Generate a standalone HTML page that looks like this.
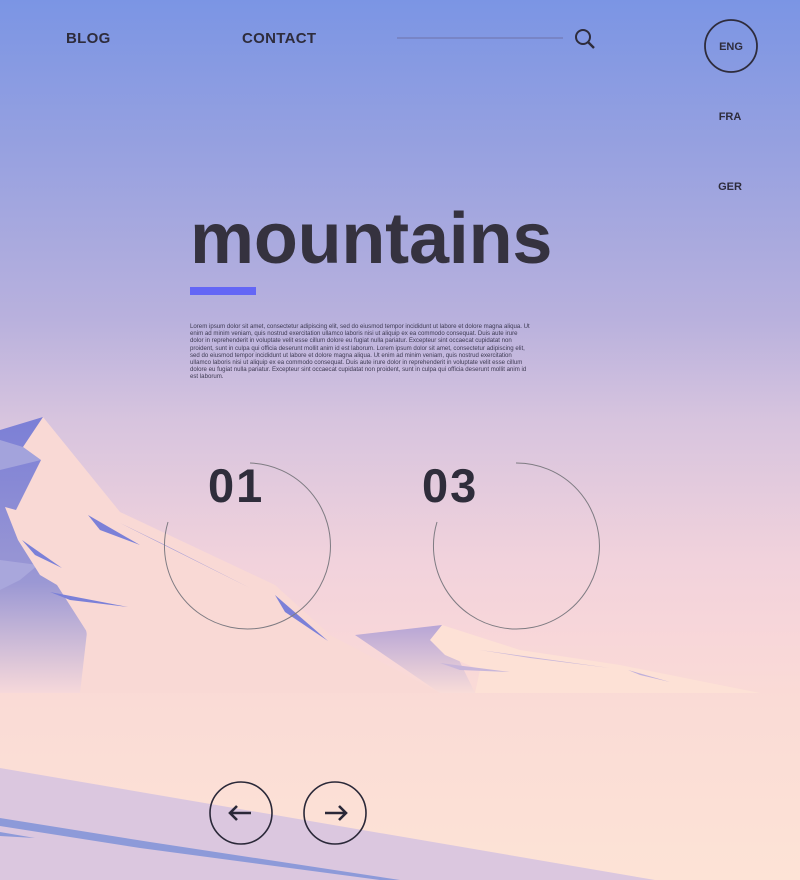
<!DOCTYPE html>
<html><head><meta charset="utf-8"><style>
*{margin:0;padding:0;box-sizing:border-box}
body{width:800px;height:880px;overflow:hidden;position:relative;font-family:"Liberation Sans",sans-serif;
background:linear-gradient(180deg,#7b95e4 0px,#97a1e0 150px,#b9b1dd 320px,#d7c4de 420px,#f1d2dc 560px,#f8d7d9 640px,#fadbd6 700px,#fde3d6 880px);}
.nav{position:absolute;font-weight:bold;font-size:15px;color:#2e2c3c;letter-spacing:.3px}
.lang{position:absolute;font-weight:bold;font-size:11px;color:#2e2c3c;width:40px;text-align:center}
svg{position:absolute;left:0;top:0}
h1{position:absolute;left:190px;top:199px;font-size:72px;font-weight:bold;color:#35323f;letter-spacing:-0.2px;line-height:80px}
.bar{position:absolute;left:190px;top:287px;width:66px;height:8px;background:#6466f6}
.p{position:absolute;left:190px;top:323px;width:340px;font-size:6.1px;line-height:7.2px;color:#3d3a52}
.num{position:absolute;font-size:47px;font-weight:bold;color:#2f2d3b;line-height:44px;letter-spacing:2px}
</style></head><body>
<svg width="800" height="880" viewBox="0 0 800 880">
<defs>
<linearGradient id="sh" x1="0" y1="0" x2="0" y2="1"><stop offset="0" stop-color="#7b7fd6"/><stop offset=".6" stop-color="#9b98d4"/><stop offset="1" stop-color="#f6d8da"/></linearGradient>
<linearGradient id="sh2" x1="0" y1="0" x2="0" y2="1"><stop offset="0" stop-color="#b7a5d6"/><stop offset="1" stop-color="#f8dcd8"/></linearGradient>
</defs>
<polygon points="0,430 43,417 88,640 80,693 0,693" fill="url(#sh)"/>
<polygon points="0,440 23,447 41,460 0,470" fill="#a3a3dc"/>
<polygon points="0,560 38,565 20,580 0,590" fill="#a9a7dc"/>
<polygon points="43,417 120,512 275,585 330,635 440,693 80,693 87,632 57,585 40,575 18,540 5,507 16,510 41,460 23,447" fill="#f9d9d5"/>
<polygon points="88,515 140,545 100,530" fill="#7b80d8"/>
<polygon points="120,523 250,588 165,545" fill="#7b80d8"/>
<polygon points="50,592 128,607 70,600" fill="#7b80d8"/>
<polygon points="275,595 328,641 285,612" fill="#7b80d8"/>
<polygon points="22,540 62,568 35,555" fill="#7b80d8"/>
<polygon points="355,635 442,625 475,693 440,693" fill="url(#sh2)"/>
<polygon points="442,625 520,650 620,665 760,693 475,693 480,670 445,655 430,640" fill="#fde1d6"/>
<polygon points="480,650 610,668 530,658" fill="#c8b6da"/>
<polygon points="628,670 670,682 640,675" fill="#c0b0da"/>
<polygon points="440,663 510,672 460,670" fill="#c8b6da"/>
<polygon points="0,768 655,880 0,880" fill="#dbc7df"/>
<polygon points="0,818 150,842 400,880 380,880 140,848 0,826" fill="#8d9ad9"/>
<polygon points="0,832 35,838 0,836" fill="#8d9ad9"/>
<path d="M250,463 A83,83 0 1 1 168,522" fill="none" stroke="#7e7b82" stroke-width="1"/>
<path d="M516,463 A83,83 0 1 1 437,522" fill="none" stroke="#7e7b82" stroke-width="1"/>
<line x1="397" y1="38" x2="563" y2="38" stroke="#6e72a8" stroke-width="1"/>
<circle cx="583" cy="37" r="7" fill="none" stroke="#2e2c3c" stroke-width="2"/>
<line x1="588" y1="42" x2="594" y2="48" stroke="#2e2c3c" stroke-width="2.4"/>
<ellipse cx="731" cy="46" rx="26" ry="26" fill="none" stroke="#2e2c3c" stroke-width="1.8"/>
<circle cx="241" cy="813" r="31" fill="none" stroke="#2a2838" stroke-width="1.6"/>
<circle cx="335" cy="813" r="31" fill="none" stroke="#2a2838" stroke-width="1.6"/>
<path d="M230,813 H251 M237,806 L230,813 L237,820" fill="none" stroke="#2a2838" stroke-width="2.6"/>
<path d="M325,813 H346 M339,806 L346,813 L339,820" fill="none" stroke="#2a2838" stroke-width="2.6"/>
</svg>
<div class="nav" style="left:66px;top:30px">BLOG</div>
<div class="nav" style="left:242px;top:30px">CONTACT</div>
<div class="lang" style="left:711px;top:41px">ENG</div>
<div class="lang" style="left:710px;top:111px">FRA</div>
<div class="lang" style="left:710px;top:181px">GER</div>
<h1>mountains</h1>
<div class="bar"></div>
<div class="p">Lorem ipsum dolor sit amet, consectetur adipiscing elit, sed do eiusmod tempor incididunt ut labore et dolore magna aliqua. Ut enim ad minim veniam, quis nostrud exercitation ullamco laboris nisi ut aliquip ex ea commodo consequat. Duis aute irure dolor in reprehenderit in voluptate velit esse cillum dolore eu fugiat nulla pariatur. Excepteur sint occaecat cupidatat non proident, sunt in culpa qui officia deserunt mollit anim id est laborum. Lorem ipsum dolor sit amet, consectetur adipiscing elit, sed do eiusmod tempor incididunt ut labore et dolore magna aliqua. Ut enim ad minim veniam, quis nostrud exercitation ullamco laboris nisi ut aliquip ex ea commodo consequat. Duis aute irure dolor in reprehenderit in voluptate velit esse cillum dolore eu fugiat nulla pariatur. Excepteur sint occaecat cupidatat non proident, sunt in culpa qui officia deserunt mollit anim id est laborum.</div>
<div class="num" style="left:208px;top:464px">01</div>
<div class="num" style="left:422px;top:464px">03</div>
</body></html>
